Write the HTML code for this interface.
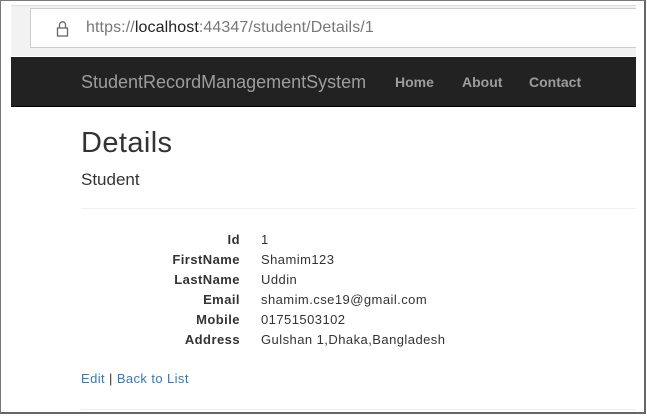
<!DOCTYPE html>
<html><head><meta charset="utf-8"><style>
*{margin:0;padding:0;box-sizing:border-box}
html,body{width:647px;height:416px;overflow:hidden;background:#fff;font-family:"Liberation Sans",Arial,sans-serif}
.frame{position:absolute;left:0;top:0;width:646px;height:414px;border:1px solid #777;border-right:2px solid #666;border-bottom:2px solid #666;background:#fff}
.chrome{position:absolute;left:11px;top:5px;width:625px;height:51px;background:#f2f2f2;border-top:1px solid #ddd}
.url{position:absolute;left:30px;top:8px;width:606px;height:40px;background:#fff;border:1px solid #ccc;border-right:none}
.lock{position:absolute;left:56px;top:20px}
.urltext{position:absolute;left:86px;top:19px;font-size:16px;color:#777;letter-spacing:0.1px}
.urltext b{color:#222;font-weight:normal}
.nav{position:absolute;left:11px;top:57px;width:625px;height:50px;background:#222;border-bottom:1px solid #000}
.brand{position:absolute;left:81px;top:72px;font-size:18px;color:#9d9d9d}
.nl{position:absolute;top:74px;font-size:14px;color:#9d9d9d;font-weight:bold}
h1{position:absolute;left:81px;top:127px;font-size:29px;font-weight:normal;color:#333;letter-spacing:0.4px}
h4{position:absolute;left:81px;top:170px;font-size:17px;font-weight:normal;color:#333}
.hr{position:absolute;left:81px;width:555px;height:1px;background:#eee}
.row{position:absolute;left:0;font-size:13px;color:#333;width:600px;letter-spacing:0.45px}
.row .l{position:absolute;right:calc(600px - 240px);font-weight:bold;white-space:nowrap}
.row .v{position:absolute;left:261px;white-space:nowrap}
.links{position:absolute;left:81px;top:371px;font-size:13px;color:#333;letter-spacing:0.4px}
.links a{color:#337ab7;text-decoration:none}
</style></head><body>
<div class="frame"></div>
<div class="chrome"></div>
<div class="url"></div>
<svg class="lock" width="13" height="17" viewBox="0 0 13 17"><path d="M3.5 8V4.8a3 3 0 0 1 6 0V8" fill="none" stroke="#666" stroke-width="1.3"/><rect x="1.5" y="8" width="10" height="8" fill="none" stroke="#666" stroke-width="1.3"/></svg>
<div class="urltext">https://<b>localhost</b>:44347/student/Details/1</div>
<div class="nav"></div>
<div class="brand">StudentRecordManagementSystem</div>
<div class="nl" style="left:395px">Home</div>
<div class="nl" style="left:462px">About</div>
<div class="nl" style="left:529px">Contact</div>
<h1>Details</h1>
<h4>Student</h4>
<div class="hr" style="top:208px"></div>
<div class="row" style="top:232px"><span class="l">Id</span><span class="v">1</span></div>
<div class="row" style="top:252px"><span class="l">FirstName</span><span class="v">Shamim123</span></div>
<div class="row" style="top:272px"><span class="l">LastName</span><span class="v">Uddin</span></div>
<div class="row" style="top:292px"><span class="l">Email</span><span class="v">shamim.cse19@gmail.com</span></div>
<div class="row" style="top:312px"><span class="l">Mobile</span><span class="v">01751503102</span></div>
<div class="row" style="top:332px"><span class="l">Address</span><span class="v">Gulshan 1,Dhaka,Bangladesh</span></div>
<div class="links"><a>Edit</a> | <a>Back to List</a></div>
<div class="hr" style="top:409px"></div>
</body></html>
